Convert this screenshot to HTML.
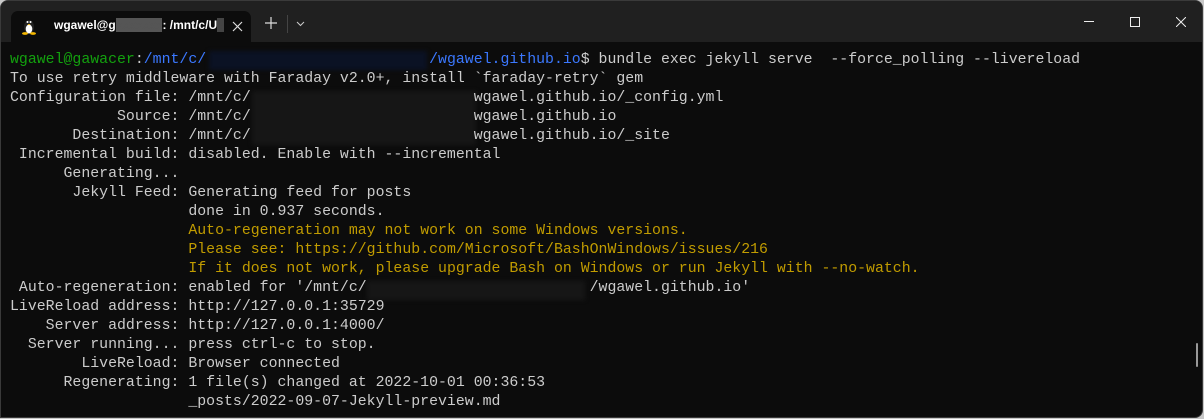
<!DOCTYPE html>
<html><head><meta charset="utf-8"><style>
html,body{margin:0;padding:0;background:#c8c8c8;width:1204px;height:419px;overflow:hidden;}
#win{position:absolute;left:0;top:0;width:1203px;height:418px;background:#0c0c0c;border-radius:8px 8px 8px 0;overflow:hidden;border:1px solid #3a3a3a;box-sizing:border-box;}
#tb{position:absolute;left:0;top:0;width:100%;height:41px;background:#202020;}
#tab{position:absolute;left:10px;top:10px;width:240px;height:31px;background:#0c0c0c;border-radius:7px 7px 0 0;}
.tt{position:absolute;top:7px;left:43px;font:600 12px "Liberation Sans",sans-serif;color:#fff;white-space:pre;}
.term{position:absolute;left:9px;top:50px;font:14.86px/19px "Liberation Mono",monospace;color:#cccccc;white-space:pre;}
.g{color:#13a10e}.b{color:#3b78ff}.y{color:#c19c00}
.blur{position:absolute;height:19px;background:#161616;filter:blur(2px);}
</style></head><body>
<div id="win">
<div id="tb">
 <div id="tab">
  <svg style="position:absolute;left:10px;top:6px" width="16" height="18" viewBox="0 0 16 18"><ellipse cx="8" cy="10" rx="5" ry="7" fill="#222"/><ellipse cx="8" cy="12" rx="3.3" ry="4.5" fill="#fff"/><circle cx="6.5" cy="5" r="1" fill="#fff"/><circle cx="9.5" cy="5" r="1" fill="#fff"/><path d="M6.5 7h3l-1.5 1.3z" fill="#f5b800"/><ellipse cx="4" cy="16.5" rx="3" ry="1.4" fill="#f5b800"/><ellipse cx="12" cy="16.5" rx="3" ry="1.4" fill="#f5b800"/></svg>
  <div class="tt">wgawel@g<span style="background:#555;color:#555">xxxxxxx</span>: /mnt/c/U<span style="background:#444;color:#444">x</span></div>
  <svg style="position:absolute;left:221px;top:10px" width="11" height="11"><path d="M1 1L10 10M10 1L1 10" stroke="#ddd" stroke-width="1.2"/></svg>
 </div>
 <svg style="position:absolute;left:264px;top:16px" width="12" height="12"><path d="M6 0V12M0 6H12" stroke="#ddd" stroke-width="1.2"/></svg>
 <div style="position:absolute;left:286px;top:14px;width:1px;height:18px;background:#444"></div>
 <svg style="position:absolute;left:295px;top:20px" width="9" height="6"><path d="M1 1L4.5 4.5L8 1" stroke="#ccc" fill="none"/></svg>
 <div style="position:absolute;left:1083px;top:20px;width:10px;height:1px;background:#eee"></div>
 <div style="position:absolute;left:1129px;top:16px;width:8px;height:8px;border:1px solid #eee"></div>
 <svg style="position:absolute;left:1175px;top:16px" width="10" height="10"><path d="M0 0L10 10M10 0L0 10" stroke="#eee" stroke-width="1"/></svg>
</div>
<div class="blur" style="left:208px;top:50px;width:218px;background:#0b1224"></div>
<div class="blur" style="left:251px;top:90px;width:224px;height:54px"></div>
<div class="blur" style="left:366px;top:280px;width:218px"></div>
<div class="term"><span class="g">wgawel@gawacer</span>:<span class="b">/mnt/c/                         /wgawel.github.io</span>$ bundle exec jekyll serve  --force_polling --livereload
To use retry middleware with Faraday v2.0+, install `faraday-retry` gem
Configuration file: /mnt/c/                         wgawel.github.io/_config.yml
            Source: /mnt/c/                         wgawel.github.io
       Destination: /mnt/c/                         wgawel.github.io/_site
 Incremental build: disabled. Enable with --incremental
      Generating...
       Jekyll Feed: Generating feed for posts
                    done in 0.937 seconds.
                    <span class="y">Auto-regeneration may not work on some Windows versions.</span>
                    <span class="y">Please see: https://github.com/Microsoft/BashOnWindows/issues/216</span>
                    <span class="y">If it does not work, please upgrade Bash on Windows or run Jekyll with --no-watch.</span>
 Auto-regeneration: enabled for '/mnt/c/                         /wgawel.github.io'
LiveReload address: http://127.0.0.1:35729
    Server address: http://127.0.0.1:4000/
  Server running... press ctrl-c to stop.
        LiveReload: Browser connected
      Regenerating: 1 file(s) changed at 2022-10-01 00:36:53
                    _posts/2022-09-07-Jekyll-preview.md</div>
<div style="position:absolute;left:1195px;top:342px;width:2px;height:24px;background:#999;border-radius:1px;"></div>
</div>
</body></html>
